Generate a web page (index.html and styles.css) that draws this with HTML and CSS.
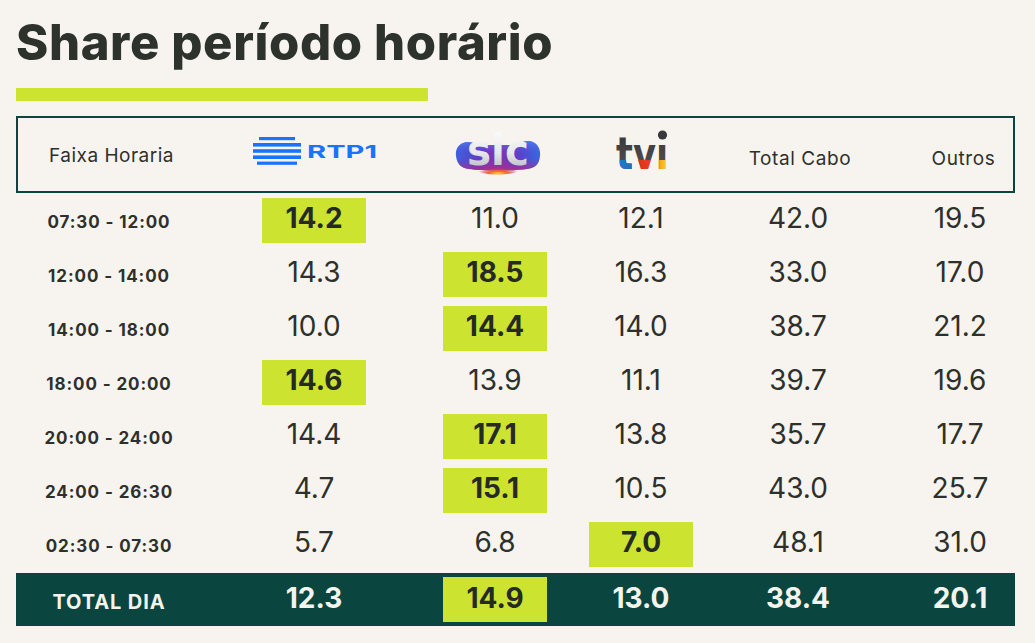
FILE: index.html
```html
<!DOCTYPE html>
<html lang="pt">
<head>
<meta charset="utf-8">
<title>Share período horário</title>
<link rel="stylesheet" href="styles.css">
</head>
<body>
<div class="page">
  <h1 class="title">Share período horário</h1>
  <div class="underline"></div>

  <div class="table">
    <div class="row head">
      <div class="cell label-head">Faixa Horaria</div>
      <div class="cell">
        <svg class="rtp" width="126" height="30" viewBox="0 0 126 30">
          <rect x="6" y="0" width="36" height="3.2" fill="#1a73ff"/>
          <rect x="0" y="6" width="48" height="3.6" fill="#1a73ff"/>
          <rect x="0" y="12.2" width="48" height="3.6" fill="#1a73ff"/>
          <rect x="0" y="18.4" width="48" height="3.6" fill="#1a73ff"/>
          <rect x="4" y="24.6" width="40" height="3.2" fill="#1a73ff"/>
          <text x="54" y="20.5" class="rtp-text" textLength="70" lengthAdjust="spacingAndGlyphs">RTP1</text>
        </svg>
      </div>
      <div class="cell">
        <svg class="sic" width="86" height="38" viewBox="0 0 86 38">
          <defs>
            <linearGradient id="sicBlob" x1="0" y1="0" x2="1" y2="0">
              <stop offset="0" stop-color="#3a63e0"/>
              <stop offset="0.25" stop-color="#5a3fc8"/>
              <stop offset="0.5" stop-color="#8a2fa8"/>
              <stop offset="0.75" stop-color="#5a3fc8"/>
              <stop offset="1" stop-color="#2f6ee6"/>
            </linearGradient>
            <linearGradient id="sicShade" x1="0" y1="0" x2="0" y2="1">
              <stop offset="0" stop-color="#4d8bff" stop-opacity="0.7"/>
              <stop offset="0.5" stop-color="#6a3cc4" stop-opacity="0"/>
              <stop offset="1" stop-color="#c02a7c" stop-opacity="0.8"/>
            </linearGradient>
            <radialGradient id="sicGlow" cx="0.5" cy="0.9" r="0.5">
              <stop offset="0" stop-color="#ffd21e"/>
              <stop offset="0.45" stop-color="#f2642a"/>
              <stop offset="1" stop-color="#c02a7c" stop-opacity="0"/>
            </radialGradient>
            <linearGradient id="sicSilver" x1="0" y1="0" x2="0" y2="1">
              <stop offset="0" stop-color="#ffffff"/>
              <stop offset="0.55" stop-color="#e6e7ec"/>
              <stop offset="1" stop-color="#a9acb8"/>
            </linearGradient>
          </defs>
          <path d="M1 19 C0 11 5 5 13 5 C19 5 23 9 30 8 L56 8 C62 9 66 4 73 4 C81 4 86 11 85 19 C84 28 80 31 72 32 C58 34 28 34 14 32 C6 31 2 27 1 19 Z" fill="url(#sicBlob)"/>
          <path d="M1 19 C0 11 5 5 13 5 C19 5 23 9 30 8 L56 8 C62 9 66 4 73 4 C81 4 86 11 85 19 C84 28 80 31 72 32 C58 34 28 34 14 32 C6 31 2 27 1 19 Z" fill="url(#sicShade)"/>
          <ellipse cx="43" cy="32" rx="22" ry="5.5" fill="url(#sicGlow)"/>
          <text x="12" y="28" class="sic-text" fill="url(#sicSilver)" textLength="62" lengthAdjust="spacingAndGlyphs">sic</text>
        </svg>
      </div>
      <div class="cell">
        <svg class="tvi" width="56" height="42" viewBox="0 0 56 42">
          <defs>
            <linearGradient id="tviFill" x1="0" y1="0" x2="0" y2="1">
              <stop offset="0" stop-color="#343436"/>
              <stop offset="1" stop-color="#58585c"/>
            </linearGradient>
            <linearGradient id="tviBottom" x1="0" y1="0" x2="1" y2="0">
              <stop offset="0" stop-color="#1d7fd0"/>
              <stop offset="0.3" stop-color="#2a6bb5"/>
              <stop offset="0.42" stop-color="#e0301c"/>
              <stop offset="0.68" stop-color="#e8401c"/>
              <stop offset="0.8" stop-color="#f39a1c"/>
              <stop offset="1" stop-color="#ffd42a"/>
            </linearGradient>
            <clipPath id="tviClip">
              <rect x="0" y="31" width="56" height="11"/>
            </clipPath>
          </defs>
          <text x="1" y="40" class="tvi-text" fill="url(#tviFill)" textLength="52" lengthAdjust="spacingAndGlyphs">tvı</text>
          <text x="1" y="40" class="tvi-text" fill="url(#tviBottom)" clip-path="url(#tviClip)" textLength="52" lengthAdjust="spacingAndGlyphs">tvı</text>
          <circle cx="47.5" cy="6" r="4.6" fill="#39393b"/>
        </svg>
      </div>
      <div class="cell head-text">Total Cabo</div>
      <div class="cell head-text outros">Outros</div>
    </div>

    <div class="row">
      <div class="cell label">07:30 - 12:00</div>
      <div class="cell"><span class="hl">14.2</span></div>
      <div class="cell">11.0</div>
      <div class="cell">12.1</div>
      <div class="cell">42.0</div>
      <div class="cell outros">19.5</div>
    </div>
    <div class="row">
      <div class="cell label">12:00 - 14:00</div>
      <div class="cell">14.3</div>
      <div class="cell"><span class="hl">18.5</span></div>
      <div class="cell">16.3</div>
      <div class="cell">33.0</div>
      <div class="cell outros">17.0</div>
    </div>
    <div class="row">
      <div class="cell label">14:00 - 18:00</div>
      <div class="cell">10.0</div>
      <div class="cell"><span class="hl">14.4</span></div>
      <div class="cell">14.0</div>
      <div class="cell">38.7</div>
      <div class="cell outros">21.2</div>
    </div>
    <div class="row">
      <div class="cell label">18:00 - 20:00</div>
      <div class="cell"><span class="hl">14.6</span></div>
      <div class="cell">13.9</div>
      <div class="cell">11.1</div>
      <div class="cell">39.7</div>
      <div class="cell outros">19.6</div>
    </div>
    <div class="row">
      <div class="cell label">20:00 - 24:00</div>
      <div class="cell">14.4</div>
      <div class="cell"><span class="hl">17.1</span></div>
      <div class="cell">13.8</div>
      <div class="cell">35.7</div>
      <div class="cell outros">17.7</div>
    </div>
    <div class="row">
      <div class="cell label">24:00 - 26:30</div>
      <div class="cell">4.7</div>
      <div class="cell"><span class="hl">15.1</span></div>
      <div class="cell">10.5</div>
      <div class="cell">43.0</div>
      <div class="cell outros">25.7</div>
    </div>
    <div class="row">
      <div class="cell label">02:30 - 07:30</div>
      <div class="cell">5.7</div>
      <div class="cell">6.8</div>
      <div class="cell"><span class="hl">7.0</span></div>
      <div class="cell">48.1</div>
      <div class="cell outros">31.0</div>
    </div>

    <div class="row total">
      <div class="cell total-label">TOTAL DIA</div>
      <div class="cell">12.3</div>
      <div class="cell"><span class="hl">14.9</span></div>
      <div class="cell">13.0</div>
      <div class="cell">38.4</div>
      <div class="cell outros">20.1</div>
    </div>
  </div>
</div>
</body>
</html>
```

FILE: styles.css
```css
* { box-sizing: border-box; }

html, body {
  margin: 0;
  padding: 0;
  background: #f7f4ef;
}

body {
  font-family: "Inter", "Noto Sans", "DejaVu Sans", sans-serif;
  color: #2e302c;
  width: 1035px;
  height: 643px;
  overflow: hidden;
}

.page {
  padding: 14px 20px 0 16px;
}

.title {
  margin: 0;
  font-size: 49px;
  line-height: 58px;
  font-weight: 800;
  letter-spacing: 0.6px;
  color: #2d322c;
}

.underline {
  width: 412px;
  height: 13px;
  background: #cce32f;
  margin-top: 16px;
}

.table {
  margin-top: 15px;
  width: 999px;
}

.row {
  display: grid;
  grid-template-columns: 186px 224px 138px 154px 160px 137px;
  height: 54px;
  align-items: center;
}

.cell {
  display: flex;
  align-items: center;
  justify-content: center;
  font-size: 28px;
  font-weight: 400;
  height: 100%;
  padding-bottom: 4px;
}

.cell.outros {
  padding-left: 27px;
}

.row.head {
  height: 77px;
  border: 2px solid #0b4540;
}

.row.head .cell {
  padding-bottom: 0;
}

.label-head {
  font-size: 19px;
  letter-spacing: 0.5px;
  padding-top: 2px;
  padding-left: 1px;
}

.row.head .head-text {
  font-size: 19px;
  letter-spacing: 0.6px;
  padding-top: 8px;
}

.row.head .head-text.outros {
  padding-left: 30px;
}

.rtp {
  margin-top: -5px;
  overflow: visible;
}

.rtp-text {
  font-family: "Inter", "DejaVu Sans", sans-serif;
  font-size: 18px;
  font-weight: 700;
  fill: #1a73ff;
}

.sic {
  margin-top: 2px;
  margin-left: 2px;
  overflow: visible;
}

.sic-text {
  font-family: "DejaVu Sans", sans-serif;
  font-weight: 700;
  font-size: 42px;
}

.tvi {
  margin-top: -10px;
  overflow: visible;
}

.tvi-text {
  font-family: "DejaVu Sans", sans-serif;
  font-weight: 700;
  font-size: 44px;
}

.row .label {
  font-size: 17px;
  font-weight: 700;
  letter-spacing: 0.9px;
  padding-top: 4px;
  padding-bottom: 0;
}

.hl {
  display: flex;
  align-items: center;
  justify-content: center;
  width: 104px;
  height: 45px;
  background: #cce32f;
  font-weight: 700;
  color: #262a24;
  padding-bottom: 4px;
  margin-top: 4px;
}

.row.total {
  margin-top: 2px;
  height: 53px;
  background: #0b4540;
  color: #f4f4ee;
}

.row.total .cell {
  font-weight: 700;
}

.row.total .total-label {
  font-size: 20px;
  letter-spacing: 0.9px;
  padding-top: 4px;
  padding-bottom: 0;
}

.row.total .hl {
  color: #262a24;
}
```
